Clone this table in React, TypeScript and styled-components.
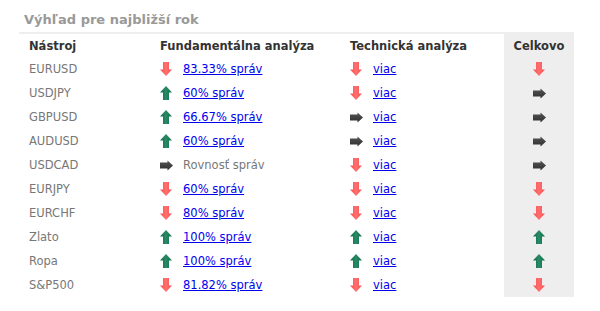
import React from "react";
import styled, { createGlobalStyle } from "styled-components";

type Trend = "up" | "down" | "flat";

type Row = {
  name: string;
  fund: Trend;
  fundText: string;
  fundLink: boolean;
  tech: Trend;
  total: Trend;
};

const rows: Row[] = [
  { name: "EURUSD", fund: "down", fundText: "83.33% správ", fundLink: true, tech: "down", total: "down" },
  { name: "USDJPY", fund: "up", fundText: "60% správ", fundLink: true, tech: "down", total: "flat" },
  { name: "GBPUSD", fund: "up", fundText: "66.67% správ", fundLink: true, tech: "flat", total: "flat" },
  { name: "AUDUSD", fund: "up", fundText: "60% správ", fundLink: true, tech: "flat", total: "flat" },
  { name: "USDCAD", fund: "flat", fundText: "Rovnosť správ", fundLink: false, tech: "down", total: "flat" },
  { name: "EURJPY", fund: "down", fundText: "60% správ", fundLink: true, tech: "down", total: "down" },
  { name: "EURCHF", fund: "down", fundText: "80% správ", fundLink: true, tech: "down", total: "down" },
  { name: "Zlato", fund: "up", fundText: "100% správ", fundLink: true, tech: "up", total: "up" },
  { name: "Ropa", fund: "up", fundText: "100% správ", fundLink: true, tech: "up", total: "up" },
  { name: "S&P500", fund: "down", fundText: "81.82% správ", fundLink: true, tech: "down", total: "down" },
];

const GlobalStyle = createGlobalStyle`
  body {
    margin: 0;
    background: #fff;
    font-family: "DejaVu Sans", Verdana, sans-serif;
  }
`;

// small gif-like trend arrows
const Arrow = ({ trend }: { trend: Trend }) => {
  if (trend === "flat") {
    return (
      <svg width="13" height="11" viewBox="0 0 13 11">
        <defs>
          <linearGradient id="gFlat" x1="0" x2="0" y1="0" y2="1">
            <stop offset="0" stopColor="#555" />
            <stop offset="1" stopColor="#2e2e2e" />
          </linearGradient>
        </defs>
        <path d="M0 2.5 H7.5 V0.5 L13 5.5 L7.5 10.5 V8.5 H0 Z" fill="url(#gFlat)" />
      </svg>
    );
  }
  if (trend === "up") {
    return (
      <svg width="12" height="14" viewBox="0 0 12 14">
        <defs>
          <linearGradient id="gUp" x1="0" x2="1" y1="0" y2="0">
            <stop offset="0" stopColor="#0f6a4a" />
            <stop offset="0.5" stopColor="#2a8a66" />
            <stop offset="1" stopColor="#0f6a4a" />
          </linearGradient>
        </defs>
        <path d="M6 0 L12 6.5 H9 V14 H3 V6.5 H0 Z" fill="url(#gUp)" />
      </svg>
    );
  }
  return (
    <svg width="12" height="14" viewBox="0 0 12 14">
      <defs>
        <linearGradient id="gDown" x1="0" x2="1" y1="0" y2="0">
          <stop offset="0" stopColor="#ff4a4a" />
          <stop offset="0.5" stopColor="#ff7070" />
          <stop offset="1" stopColor="#ff4a4a" />
        </linearGradient>
      </defs>
      <path d="M3 0 H9 V7.5 H12 L6 14 L0 7.5 H3 Z" fill="url(#gDown)" />
    </svg>
  );
};

const App = () => {
  return (
    <>
      <GlobalStyle />
      <Page>
        <Title>Výhľad pre najbližší rok</Title>
        <Table>
          <HeadCell>Nástroj</HeadCell>
          <HeadCell>Fundamentálna analýza</HeadCell>
          <HeadCell>Technická analýza</HeadCell>
          <TotalHead>Celkovo</TotalHead>
          {rows.map((r) => (
            <React.Fragment key={r.name}>
              <NameCell>{r.name}</NameCell>
              <SignalCell>
                <IconBox>
                  <Arrow trend={r.fund} />
                </IconBox>
                {r.fundLink ? <Link href="#">{r.fundText}</Link> : <Muted>{r.fundText}</Muted>}
              </SignalCell>
              <SignalCell>
                <IconBox>
                  <Arrow trend={r.tech} />
                </IconBox>
                <Link href="#">viac</Link>
              </SignalCell>
              <TotalCell>
                <Arrow trend={r.total} />
              </TotalCell>
            </React.Fragment>
          ))}
        </Table>
      </Page>
    </>
  );
};

export default App;

const Page = styled.div`
  width: 600px;
  height: 311px;
  padding: 12px 0 0 19px;
  box-sizing: border-box;
`;

const Title = styled.div`
  font-size: 13px;
  font-weight: bold;
  color: #999;
  padding-left: 5px;
  height: 20px;
  line-height: 16px;
`;

const Table = styled.div`
  display: grid;
  grid-template-columns: 141px 190px 154px 70px;
  grid-template-rows: 23px repeat(10, 24px);
  border-top: 2px solid #eee;
  width: 555px;
  font-size: 11.5px;
`;

const HeadCell = styled.div`
  display: flex;
  align-items: center;
  font-weight: bold;
  color: #333;
  &:first-child {
    padding-left: 10px;
  }
`;

const TotalHead = styled(HeadCell)`
  justify-content: center;
  background: #eee;
`;

const NameCell = styled.div`
  display: flex;
  align-items: center;
  padding-left: 10px;
  color: #777;
`;

const SignalCell = styled.div`
  display: flex;
  align-items: center;
  gap: 10px;
`;

const IconBox = styled.span`
  display: flex;
  width: 13px;
  justify-content: flex-start;
`;

const Link = styled.a`
  color: #0000ee;
  text-decoration: underline;
`;

const Muted = styled.span`
  color: #777;
`;

const TotalCell = styled.div`
  display: flex;
  align-items: center;
  justify-content: center;
  background: #eee;
`;
